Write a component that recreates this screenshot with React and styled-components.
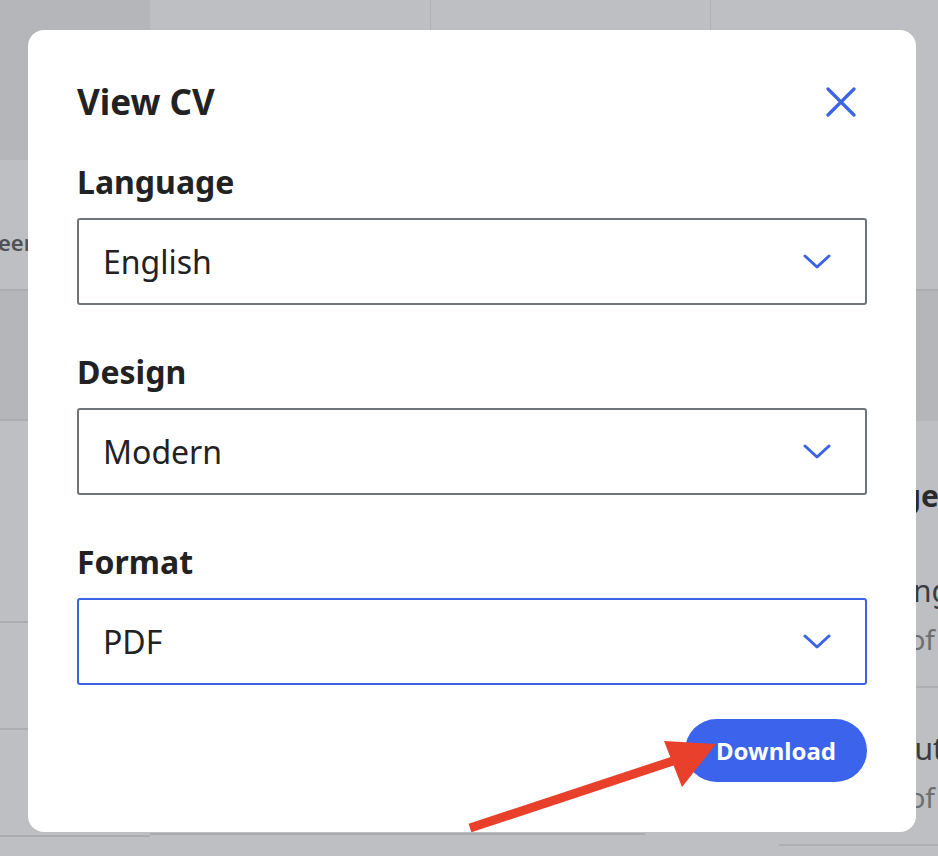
import styled, { createGlobalStyle } from "styled-components"

const Global = createGlobalStyle`
    html, body {
        margin: 0;
        padding: 0;
        background: #bdbfc2;
        font-family: "Noto Sans", "Open Sans", sans-serif;
        overflow: hidden;
    }
`

// dimmed page behind the dialog
const Page = styled.div`
    width: 938px;
    height: 856px;
    display: flex;
    overflow: hidden;
    background: #bdbfc2;
    color: #4b4d50;
`

const Column = styled.div`
    width: ${p => p.w}px;
    flex-shrink: 0;
    display: flex;
    flex-direction: column;
`

const Block = styled.div`
    height: ${p => p.h}px;
    flex-shrink: 0;
    box-sizing: border-box;
    background: ${p => p.dark ? "#b4b6b9" : "transparent"};
    border-bottom: ${p => p.line ? "2px solid #abadb0" : "none"};
    display: flex;
    align-items: center;
    white-space: nowrap;
`

const CutLabel = styled.span`
    padding-top: 34px;
    margin-left: -2px;
    font-size: 22px;
    font-weight: 600;
    color: #505255;
`

const TopCells = styled.div`
    height: 160px;
    display: grid;
    grid-template-columns: 281px 280px;
`

const TopCell = styled.div`
    border-right: 1px solid #adafb2;
`

const BottomLine = styled.div`
    margin-top: auto;
    margin-bottom: 21px;
    width: ${p => p.w}px;
    border-bottom: 2px solid #a9abae;
`

const SideText = styled.div`
    padding-left: 68px;
    white-space: nowrap;
    display: flex;
    flex-direction: column;
`

const SideHead = styled.div`
    font-weight: 700;
    font-size: 30px;
    color: #2a2b2d;
    margin: 54px 0 50px -6px;
`

const SideItem = styled.div`
    border-bottom: 2px solid #adafb2;
    padding-bottom: 24px;
    margin-bottom: 36px;
`

const ItemTitle = styled.div`
    font-size: 30px;
    color: #3a3b3d;
    line-height: 50px;
`

const ItemSub = styled.div`
    font-size: 28px;
    color: #6c6e71;
    line-height: 46px;
`

const Modal = styled.div`
    position: fixed;
    top: 30px;
    left: 28px;
    width: 888px;
    height: 802px;
    box-sizing: border-box;
    background: #fff;
    border-radius: 16px;
    padding: 48px 49px 0 49px;
    display: flex;
    flex-direction: column;
`

const HeaderRow = styled.div`
    display: flex;
    align-items: center;
    justify-content: space-between;
    margin-bottom: 36px;
`

const Title = styled.h2`
    margin: 0;
    font-size: 35px;
    font-weight: 700;
    color: #222;
    line-height: 48px;
`

const CloseBtn = styled.button`
    background: none;
    border: none;
    padding: 0;
    width: 36px;
    height: 36px;
    margin-right: 8px;
    display: flex;
    align-items: center;
    justify-content: center;
    cursor: pointer;
`

const Field = styled.div`
    display: flex;
    flex-direction: column;
    margin-bottom: 47px;
`

const Label = styled.label`
    font-size: 32px;
    font-weight: 700;
    color: #222;
    line-height: 40px;
    margin-bottom: 16px;
`

const Select = styled.div`
    height: 87px;
    box-sizing: border-box;
    border: 2px solid ${p => p.active ? "#3b63e6" : "#6f757b"};
    border-radius: 3px;
    display: flex;
    align-items: center;
    justify-content: space-between;
    padding: 0 34px 0 24px;
    font-size: 32px;
    color: #222;
`

const Footer = styled.div`
    display: flex;
    justify-content: flex-end;
    margin-top: -13px;
`

const DownloadBtn = styled.button`
    height: 63px;
    width: 182px;
    border: none;
    border-radius: 32px;
    background: #3b63ec;
    color: #fff;
    font-family: inherit;
    font-size: 24px;
    font-weight: 700;
    cursor: pointer;
`

const Arrow = styled.svg`
    position: fixed;
    top: 0;
    left: 0;
    pointer-events: none;
`

const Chevron = () => (
    <svg width="28" height="18" viewBox="0 0 28 18" fill="none">
        <path d="M2 3 L14 14 L26 3" stroke="#3b63e6" strokeWidth="3" strokeLinecap="round" strokeLinejoin="round" />
    </svg>
)

const fields = [
    {label: "Language", value: "English"},
    {label: "Design", value: "Modern"},
    {label: "Format", value: "PDF", active: true},
]

const skills = [
    {title: "Engineering", sub: "Overview of"},
    {title: "Regular output", sub: "Overview of"},
]

export default function App() {
    return (
        <>
            <Global />
            <Page>
                <Column w={150}>
                    <Block h={160} dark />
                    <Block h={131} line>
                        <CutLabel>eer</CutLabel>
                    </Block>
                    <Block h={130} dark line />
                    <Block h={202} line />
                    <Block h={107} line />
                    <Block h={107} line />
                </Column>
                <Column w={561}>
                    <TopCells>
                        <TopCell />
                        <TopCell />
                    </TopCells>
                    <BottomLine w={495} />
                </Column>
                <Column w={227}>
                    <Block h={291} line />
                    <Block h={130} dark />
                    <SideText>
                        <SideHead>Knowledge</SideHead>
                        {skills.map(s => (
                            <SideItem key={s.title}>
                                <ItemTitle>{s.title}</ItemTitle>
                                <ItemSub>{s.sub}</ItemSub>
                            </SideItem>
                        ))}
                    </SideText>
                </Column>
            </Page>

            <Modal>
                <HeaderRow>
                    <Title>View CV</Title>
                    <CloseBtn aria-label="Close">
                        <svg width="30" height="30" viewBox="0 0 30 30">
                            <path d="M2 2 L28 28 M28 2 L2 28" stroke="#3b63e6" strokeWidth="3.2" strokeLinecap="round" />
                        </svg>
                    </CloseBtn>
                </HeaderRow>
                {fields.map(f => (
                    <Field key={f.label}>
                        <Label>{f.label}</Label>
                        <Select active={f.active}>
                            {f.value}
                            <Chevron />
                        </Select>
                    </Field>
                ))}
                <Footer>
                    <DownloadBtn>Download</DownloadBtn>
                </Footer>
            </Modal>

            <Arrow width="938" height="856" viewBox="0 0 938 856">
                <line x1="470" y1="828" x2="682" y2="758" stroke="#e8402a" strokeWidth="9" />
                <polygon points="716,744 664,741 682,787" fill="#e8402a" />
            </Arrow>
        </>
    )
}
